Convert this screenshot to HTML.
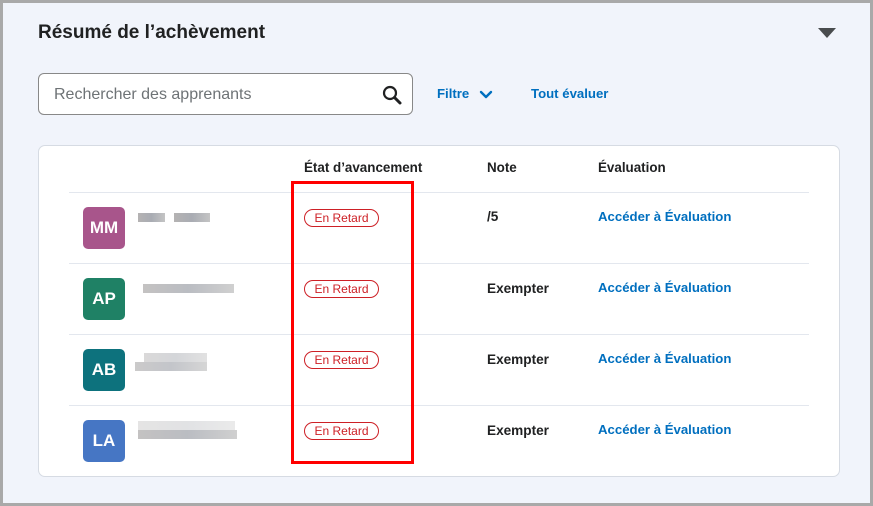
<!DOCTYPE html>
<html><head><style>
*{box-sizing:border-box;margin:0;padding:0}
body{width:873px;height:506px;background:#a9a9a9;font-family:"Liberation Sans",sans-serif;position:relative;overflow:hidden}
.bg{position:absolute;left:3px;top:3px;width:867px;height:500px;background:#f1f4fb}
.abs{position:absolute}
h1{position:absolute;left:38px;top:22px;font-size:19px;font-weight:bold;color:#202122}
.tri{position:absolute;left:818px;top:28px;width:0;height:0;border-left:9px solid transparent;border-right:9px solid transparent;border-top:10px solid #494c4e}
.search{position:absolute;left:38px;top:73px;width:375px;height:42px;border:1px solid #888;border-radius:6px;background:#fff}
.search span{position:absolute;left:15px;top:12px;font-size:16px;color:#6e7376}
.link{color:#006fbf;font-weight:bold;font-size:13.2px}
.card{position:absolute;left:38px;top:145px;width:802px;height:332px;background:#fff;border:1px solid #d6dbe3;border-radius:7px}
.th{position:absolute;top:160px;font-size:13.4px;font-weight:bold;color:#202122}
.line{position:absolute;left:69px;width:740px;height:1px;background:#e3e7ee}
.av{position:absolute;left:83px;width:42px;height:42px;border-radius:5px;color:#fff;font-weight:bold;font-size:17px;text-align:center;line-height:42px}
.pill{position:absolute;left:304px;width:75px;height:18px;border:1px solid #cd2026;border-radius:9px;color:#cd2026;font-size:12px;text-align:center;line-height:16px}
.note{position:absolute;left:487px;font-size:13.6px;font-weight:bold;color:#202122}
.acc{position:absolute;left:598px}
.blur{position:absolute;height:9px;background:linear-gradient(90deg,#b5b3b3,#a9acb3,#c4c4c4)}
.red{position:absolute;left:291px;top:181px;width:123px;height:283px;border:3px solid #f00}
</style></head><body>
<div class="bg"></div>
<h1>Résumé de l’achèvement</h1>
<div class="tri"></div>
<div class="search"><span>Rechercher des apprenants</span>
<svg class="abs" style="left:342px;top:10px" width="22" height="22" viewBox="0 0 22 22"><circle cx="9" cy="9" r="6" fill="none" stroke="#202122" stroke-width="2.2"/><path d="M13.5 13.5L19 19" stroke="#202122" stroke-width="3" stroke-linecap="round"/></svg></div>
<div class="abs link" style="left:437px;top:86px">Filtre</div>
<svg class="abs" style="left:479px;top:90px" width="14" height="10" viewBox="0 0 14 10"><path d="M2 2l5 5 5-5" fill="none" stroke="#006fbf" stroke-width="2.4" stroke-linecap="round" stroke-linejoin="round"/></svg>
<div class="abs link" style="left:531px;top:86px">Tout évaluer</div>
<div class="card"></div>
<div class="th" style="left:304px">État d’avancement</div>
<div class="th" style="left:487px">Note</div>
<div class="th" style="left:598px">Évaluation</div>
<div class="line" style="top:192px"></div>
<div class="line" style="top:263px"></div>
<div class="line" style="top:334px"></div>
<div class="line" style="top:405px"></div>

<div class="av" style="top:207px;background:#a8558b">MM</div>
<div class="blur" style="left:138px;top:213px;width:27px"></div><div class="blur" style="left:174px;top:213px;width:36px"></div>
<div class="pill" style="top:209px">En Retard</div>
<div class="note" style="top:209px">/5</div>
<div class="acc link" style="top:209px">Accéder à Évaluation</div>

<div class="av" style="top:278px;background:#1f8165">AP</div>
<div class="blur" style="left:143px;top:284px;width:91px;opacity:.8"></div>
<div class="pill" style="top:280px">En Retard</div>
<div class="note" style="top:281px">Exempter</div>
<div class="acc link" style="top:280px">Accéder à Évaluation</div>

<div class="av" style="top:349px;background:#0d727d">AB</div>
<div class="blur" style="left:144px;top:353px;width:63px;opacity:.5"></div>
<div class="blur" style="left:135px;top:362px;width:72px;opacity:.7"></div>
<div class="pill" style="top:351px">En Retard</div>
<div class="note" style="top:352px">Exempter</div>
<div class="acc link" style="top:351px">Accéder à Évaluation</div>

<div class="av" style="top:420px;background:#4676c4">LA</div>
<div class="blur" style="left:138px;top:421px;width:97px;opacity:.35"></div>
<div class="blur" style="left:138px;top:430px;width:99px;opacity:.8"></div>
<div class="pill" style="top:422px">En Retard</div>
<div class="note" style="top:423px">Exempter</div>
<div class="acc link" style="top:422px">Accéder à Évaluation</div>

<div class="red"></div>
</body></html>
